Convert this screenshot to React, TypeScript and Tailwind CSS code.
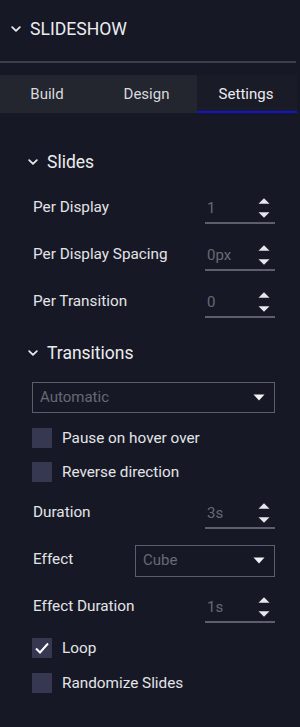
import React from "react";

const Chevron = ({ className = "" }: { className?: string }) => (
  <svg width="10" height="6" viewBox="0 0 10 6" className={className}>
    <path d="M1.2 1.2 L5 4.8 L8.8 1.2" fill="none" stroke="#e8e8ec" strokeWidth="1.8" strokeLinecap="round" strokeLinejoin="round" />
  </svg>
);

const Spinner = () => (
  <div className="flex flex-col items-center gap-[8px] mr-[5px]">
    <svg width="12" height="6" viewBox="0 0 12 6"><path d="M6 0.3 L11.5 5.7 L0.5 5.7 Z" fill="#e6e6ea" /></svg>
    <svg width="12" height="6" viewBox="0 0 12 6"><path d="M0.5 0.3 L11.5 0.3 L6 5.7 Z" fill="#e6e6ea" /></svg>
  </div>
);

const NumberRow = ({ label, value }: { label: string; value: string }) => (
  <div className="h-[47px] flex items-center justify-between">
    <span className="text-[15.3px] text-[#e4e4e8] ml-px">{label}</span>
    <div className="w-[70px] h-[30px] mt-[3px] border-b-2 border-[#5d606c] flex items-center justify-between pl-[2px]">
      <span className="text-[15px] text-[#666976]">{value}</span>
      <Spinner />
    </div>
  </div>
);

const Caret = () => (
  <svg width="12" height="7" viewBox="0 0 12 7"><path d="M0.5 0.5 L11.5 0.5 L6 6.5 Z" fill="#f2f2f4" /></svg>
);

const Check = ({ label, checked = false, h }: { label: string; checked?: boolean; h: string }) => (
  <div className={`${h} flex items-center`}>
    <div className="w-[20px] h-[20px] bg-[#363750] flex items-center justify-center">
      {checked && (
        <svg width="16" height="14" viewBox="0 0 16 14"><path d="M2 7.5 L6 11.5 L14 2.5" fill="none" stroke="#ffffff" strokeWidth="2" /></svg>
      )}
    </div>
    <span className="ml-[10px] text-[15.3px] text-[#e4e4e8]">{label}</span>
  </div>
);

export default function App() {
  return (
    <div className="w-[300px] h-[727px] bg-[#161925] overflow-hidden" style={{ fontFamily: "Roboto, 'Noto Sans', sans-serif" }}>
      <div className="w-[297px]">
        <div className="h-[61px] flex items-center pb-[3px]">
          <Chevron className="ml-[11px]" />
          <span className="ml-[9px] text-[17.6px] text-[#ececf0]">SLIDESHOW</span>
        </div>
        <div className="h-[2px] w-[296px] bg-[#3c3f4b]" />
        <div className="mt-[12px] h-[38px] bg-[#23252f] flex">
          <div className="w-[99px] flex items-center justify-center text-[15px] text-[#d9d9de] pr-[5px]">Build</div>
          <div className="w-[98px] flex items-center justify-center text-[15px] text-[#d9d9de] pr-[3px]">Design</div>
          <div className="flex-1 flex items-center justify-center text-[15px] text-[#ececf0] bg-[#191b27] border-b-2 border-[#1414cf] pt-[2px] pr-[2px]">Settings</div>
        </div>

        <div className="pl-[32px] pr-[22px]">
          <div className="mt-[31px] h-[36px] flex items-center">
            <Chevron className="-ml-[4px]" />
            <span className="ml-[9px] text-[17.5px] text-[#ececf0]">Slides</span>
          </div>
          <div className="mt-[4px]">
            <NumberRow label="Per Display" value="1" />
            <NumberRow label="Per Display Spacing" value="0px" />
            <NumberRow label="Per Transition" value="0" />
          </div>
          <div className="mt-[10px] h-[36px] flex items-center">
            <Chevron className="-ml-[4px]" />
            <span className="ml-[9px] text-[17.5px] text-[#ececf0]">Transitions</span>
          </div>
          <div className="mt-[11px] h-[31px] border border-[#5b5e6b] flex items-center justify-between pl-[7px] pr-[9px]">
            <span className="text-[15px] text-[#666976]">Automatic</span>
            <Caret />
          </div>
          <div className="mt-[8px]">
            <Check label="Pause on hover over" h="h-[34px]" />
            <Check label="Reverse direction" h="h-[34px]" />
          </div>
          <NumberRow label="Duration" value="3s" />
          <div className="h-[47px] flex items-center justify-between">
            <span className="text-[15.3px] text-[#e4e4e8] ml-px">Effect</span>
            <div className="w-[140px] h-[32px] mt-[2px] border border-[#5b5e6b] flex items-center justify-between pl-[7px] pr-[9px]">
              <span className="text-[15px] text-[#666976]">Cube</span>
              <Caret />
            </div>
          </div>
          <NumberRow label="Effect Duration" value="1s" />
          <Check label="Loop" checked h="h-[36px]" />
          <Check label="Randomize Slides" h="h-[34px]" />
        </div>
      </div>
    </div>
  );
}
